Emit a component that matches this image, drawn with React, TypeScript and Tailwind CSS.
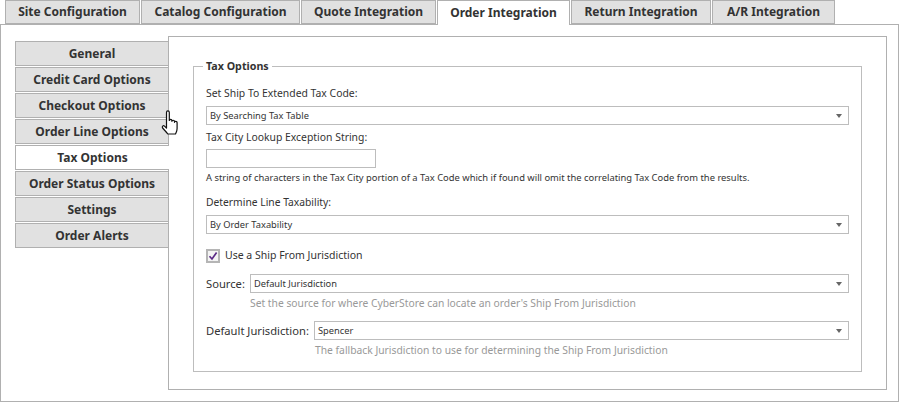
const tabs = [
  { label: 'Site Configuration', width: 'w-[135px]' },
  { label: 'Catalog Configuration', width: 'w-[159px]' },
  { label: 'Quote Integration', width: 'w-[135px]' },
  { label: 'Order Integration', width: 'w-[133px]', active: true },
  { label: 'Return Integration', width: 'w-[140px]' },
  { label: 'A/R Integration', width: 'w-[123px]' },
];

const menu = [
  'General',
  'Credit Card Options',
  'Checkout Options',
  'Order Line Options',
  'Tax Options',
  'Order Status Options',
  'Settings',
  'Order Alerts',
];

function Select({ value, className = '' }: { value: string; className?: string }) {
  return (
    <div className={`flex h-[19px] items-center justify-between border border-[#bdbdbd] bg-white pl-[3px] pr-[6px] text-[9.3px] text-[#333] ${className}`}>
      <span>{value}</span>
      <span className="h-0 w-0 border-x-[3.5px] border-t-[4px] border-x-transparent border-t-[#666]" />
    </div>
  );
}

function HandCursor() {
  return (
    <svg className="absolute left-[161px] top-[110px] z-20" width="19" height="25" viewBox="0 0 19 25">
      <path
        d="M5.5 2.4c0-2 2.8-2 2.8 0v8c0-1.4 2.6-1.4 2.6 0v.9c0-1.4 2.6-1.4 2.6 0v1c0-1.3 2.6-1.3 2.6.2v6c0 2.4-.8 3.6-1.6 5.5H6.8c-1.5-2.2-3.4-3.8-5.2-6-1-1.3.7-3 1.9-1.9l2 2z"
        fill="#fff"
        stroke="#111"
        strokeWidth="1.2"
        strokeLinejoin="round"
      />
    </svg>
  );
}

export default function App() {
  return (
    <div className="relative h-[402px] w-[899px] overflow-hidden bg-white font-['Noto_Sans','Open_Sans',sans-serif] text-[#333]">
      {/* Tabs */}
      <div className="relative z-10 flex h-[25px] gap-px pl-[5px]">
        {tabs.map((tab) => (
          <div
            key={tab.label}
            className={`flex items-center justify-center border border-[#b0b0b0] text-[12px] font-bold ${tab.width} ${
              tab.active ? 'h-[25px] border-b-0 bg-white pb-px' : 'h-[24px] bg-[#e1e1e1]'
            }`}
          >
            {tab.label}
          </div>
        ))}
      </div>

      {/* Frame */}
      <div className="-mt-px flex h-[378px] w-[899px] border border-[#b0b0b0] pl-[14px] pr-[11px] pt-[11px]">
        {/* Side menu */}
        <div className="z-10 mt-[5px] flex w-[154px] flex-col gap-px">
          {menu.map((item) => (
            <div
              key={item}
              className={`flex h-[25px] items-center justify-center border border-[#b0b0b0] text-[12px] font-bold ${
                item === 'Tax Options' ? 'border-r-0 bg-white' : 'bg-[#e1e1e1]'
              }`}
            >
              {item}
            </div>
          ))}
        </div>

        {/* Panel */}
        <div className="-ml-px h-[354px] flex-1 border border-[#b0b0b0] px-[24px] pt-[22px]">
          <fieldset className="h-[313px] border border-[#bdbdbd] px-[12px] pt-[12px]">
            <legend className="-ml-[3px] px-[3px] text-[10.7px] font-bold leading-[15px]">Tax Options</legend>

            <div className="text-[10.4px] leading-[15px]">Set Ship To Extended Tax Code:</div>
            <Select value="By Searching Tax Table" className="mt-[5px]" />

            <div className="mt-[5px] text-[10.4px] leading-[15px]">Tax City Lookup Exception String:</div>
            <div className="mt-[4px] h-[19px] w-[170px] border border-[#bdbdbd]" />
            <div className="mt-[2px] text-[9.4px] leading-[15px]">
              A string of characters in the Tax City portion of a Tax Code which if found will omit the correlating Tax Code from the results.
            </div>

            <div className="mt-[10px] text-[10.3px] leading-[15px]">Determine Line Taxability:</div>
            <Select value="By Order Taxability" className="mt-[5px]" />

            <div className="mt-[14px] flex h-[15px] items-center gap-[5px]">
              <div className="flex h-[14px] w-[14px] items-center justify-center border-2 border-[#b5b5b5] bg-[#f4f4f4]">
                <svg width="10" height="10" viewBox="0 0 10 10">
                  <path d="M1.5 5.2 4 8l4.6-6.5" fill="none" stroke="#5b2a86" strokeWidth="1.7" />
                </svg>
              </div>
              <span className="text-[10.5px]">Use a Ship From Jurisdiction</span>
            </div>

            <div className="mt-[11px] flex items-center gap-[5px]">
              <span className="pt-px text-[11.2px]">Source:</span>
              <Select value="Default Jurisdiction" className="flex-1" />
            </div>
            <div className="ml-[44px] mt-[3px] text-[10.3px] leading-[15px] text-[#999]">
              Set the source for where CyberStore can locate an order's Ship From Jurisdiction
            </div>

            <div className="mt-[10px] flex items-center gap-[5px]">
              <span className="pt-px text-[11.2px]">Default Jurisdiction:</span>
              <Select value="Spencer" className="flex-1" />
            </div>
            <div className="ml-[109px] mt-[3px] text-[10.3px] leading-[15px] text-[#999]">
              The fallback Jurisdiction to use for determining the Ship From Jurisdiction
            </div>
          </fieldset>
        </div>
      </div>
      <HandCursor />
    </div>
  );
}
